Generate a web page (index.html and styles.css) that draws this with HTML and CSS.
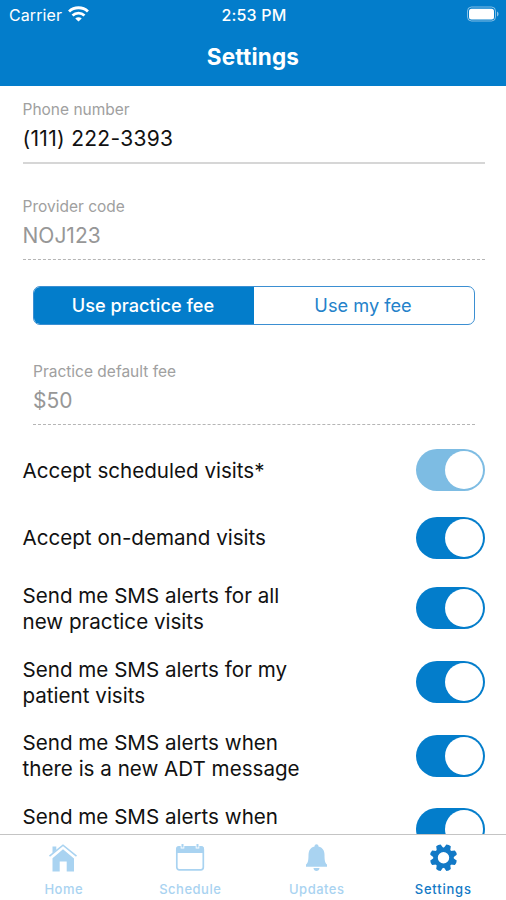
FILE: index.html
```html
<!DOCTYPE html>
<html lang="en">
<head>
<meta charset="utf-8">
<title>Settings</title>
<link rel="stylesheet" href="styles.css">
</head>
<body>
<div class="app">
  <header class="header">
    <div class="status">
      <div class="carrier"><span>Carrier</span>
        <svg class="wifi" viewBox="0 0 20 15" width="21" height="16" fill="none" stroke="#fff" stroke-width="2.7"><path d="M1 5.100C6 .4 14 .4 19 5.100"/><path d="M4.300 8.900c3.300-3 8.100-3 11.400 0"/><path d="M10 14.700 6.900 11.700c1.800-1.500 4.400-1.500 6.200 0z" fill="#fff" stroke="none"/></svg>
      </div>
      <div class="time">2:53 PM</div>
      <svg class="battery" viewBox="0 0 34 16" width="34" height="16"><rect x="1.500" y="1" width="28" height="14" rx="4" fill="none" stroke="#fff" stroke-opacity=".5"/><rect x="3" y="2.700" width="25" height="10.800" rx="2.500" fill="#fff"/><path d="M31 5.500c2 .8 2 4.200 0 5z" fill="#fff" fill-opacity=".55"/></svg>
    </div>
    <h1 class="title">Settings</h1>
  </header>
  <main class="content">
    <div class="field"><div class="label">Phone number</div><div class="value phone">(111) 222-3393</div></div>
    <div class="field locked provider"><div class="label">Provider code</div><div class="value">NOJ123</div></div>
    <div class="segmented"><div class="segment active">Use practice fee</div><div class="segment">Use my fee</div></div>
    <div class="field locked fee"><div class="label">Practice default fee</div><div class="value">$50</div></div>
    <div class="options">
      <div class="option single"><span>Accept scheduled visits*</span><i class="toggle muted"></i></div>
      <div class="option single"><span>Accept on-demand visits</span><i class="toggle"></i></div>
      <div class="option"><span>Send me SMS alerts for all<br>new practice visits</span><i class="toggle"></i></div>
      <div class="option"><span>Send me SMS alerts for my<br>patient visits</span><i class="toggle"></i></div>
      <div class="option"><span>Send me SMS alerts when<br>there is a new ADT message</span><i class="toggle"></i></div>
      <div class="option"><span>Send me SMS alerts when<br>the</span><i class="toggle"></i></div>
    </div>
  </main>
  <nav class="tabs">
    <div class="tab"><svg viewBox="0 0 30 30" width="30" height="30"><path fill="currentColor" d="M4.500 3.500h3.800v3.500L4.500 10zM15 6.200 26 15.500V28.500h-7.300V18.500h-7v10H4.500V15.300z"/><path d="m1.500 13.200 13.500-11 13.500 11" fill="none" stroke="currentColor" stroke-width="1.600"/></svg><span>Home</span></div>
    <div class="tab"><svg viewBox="0 0 30 30" width="30" height="30"><rect x="1.800" y="4" width="26.500" height="22.800" rx="2.500" fill="none" stroke="currentColor" stroke-width="1.700"/><path fill="currentColor" d="M1 10V6q0-3 3-3h22q3 0 3 3v4z"/><path d="M7.500 1v4.500M22.500 1v4.500" stroke="#fff" stroke-width="3.600"/><path d="M7.500 1v3.500M22.500 1v3.500" stroke="currentColor" stroke-width="2"/></svg><span>Schedule</span></div>
    <div class="tab"><svg viewBox="0 0 30 30" width="30" height="30"><path fill="currentColor" d="M13.500 3.500c0-3 4-3 4 0 4 1 6 4 6 8.500 0 6 .7 8 2.500 9.500v2.200h-21v-2.200C6.800 20 7.500 18 7.500 12c0-4.500 2-7.500 6-8.500zM12.500 25h6c0 4-6 4-6 0z"/></svg><span>Updates</span></div>
    <div class="tab current"><svg viewBox="0 0 30 30" width="30" height="30"><g fill="currentColor" transform="translate(15.500 14.700)"><path id="gear-teeth" d="M-3.500-9-2.400-13.300Q0-14.300 2.400-13.300L3.500-9zM-3.500 9-2.400 13.300Q0 14.300 2.400 13.300L3.500 9z" transform="rotate(22.500)"/><use href="#gear-teeth" transform="rotate(45)"/><use href="#gear-teeth" transform="rotate(90)"/><use href="#gear-teeth" transform="rotate(135)"/></g><circle cx="15.500" cy="14.700" r="8" fill="none" stroke="currentColor" stroke-width="4.600"/></svg><span>Settings</span></div>
  </nav>
</div>
</body>
</html>
```
FILE: styles.css
```css
* { box-sizing: border-box; }
body { margin: 0; background: #fff; font-family: Inter, "Liberation Sans", sans-serif; color: #111; }
.app { width: 506px; height: 900px; display: flex; flex-direction: column; overflow: hidden; }
.header { height: 86px; flex: none; background: #037dcb; color: #fff; }
.status { height: 29px; display: grid; grid-template-columns: 1fr auto 1fr; align-items: center; padding: 0 6px 0 9px; font-size: 16px; }
.carrier { display: flex; align-items: center; gap: 6px; letter-spacing: .1px; }
.wifi { margin-top: -1px; }
.time { font-weight: 500; padding-right: 1px; letter-spacing: .2px; }
.battery { justify-self: end; margin-top: -2px; }
.title { margin: 13px 0 0; font-size: 22.500px; line-height: 30px; font-weight: 700; text-align: center; letter-spacing: .2px; }
.content { flex: 1; min-height: 0; overflow: hidden; padding: 13px 21px 0 22.500px; }
.field { height: 65px; padding-top: 1px; border-bottom: 2px solid #d6d6d6; }
.label { font-size: 15.500px; line-height: 20px; color: #a0a0a0; }
.value { font-size: 21px; line-height: 26px; margin-top: 6px; }
.phone { letter-spacing: .3px; }
.locked { height: 64px; border-bottom: 1px dashed #b5b5b5; }
.locked .value { color: #979797; }
.provider { margin-top: 32px; }
.segmented { display: grid; grid-template-columns: 1fr 1fr; height: 39px; margin: 26px 10px 0 10.500px; border: 1px solid #3b8fd2; border-radius: 7px; overflow: hidden; }
.segment { display: flex; align-items: center; justify-content: center; color: #2482ca; font-size: 18.200px; padding: 0 2px 1px 0; }
.segment.active { background: #037dcb; color: #fff; font-weight: 500; }
.fee { margin: 36px 10px 0 10.500px; }
.options { margin-top: 11.500px; }
.option { height: 73.700px; display: flex; align-items: center; justify-content: space-between; font-size: 20.600px; line-height: 26px; }
.option.single { height: 67.500px; }
.option span { padding-top: 1px; }
.toggle { width: 69px; height: 42px; flex: none; border-radius: 21px; background: #037dcb; display: flex; align-items: center; justify-content: flex-end; padding-right: 2px; }
.toggle::after { content: ""; width: 38px; height: 38px; border-radius: 50%; background: #fff; }
.muted { background: #7dbce3; }
.tabs { flex: none; height: 66px; border-top: 1px solid #c4c4c4; background: #fff; display: grid; grid-template-columns: repeat(4, 1fr); }
.tab { display: flex; flex-direction: column; align-items: center; padding-top: 8px; color: #a9d3f1; font-size: 13px; line-height: 18px; font-weight: 500; letter-spacing: .5px; }
.tab span { margin-top: 6.500px; padding-left: 1px; }
.tab.current { color: #1279c6; letter-spacing: .8px; }
```
